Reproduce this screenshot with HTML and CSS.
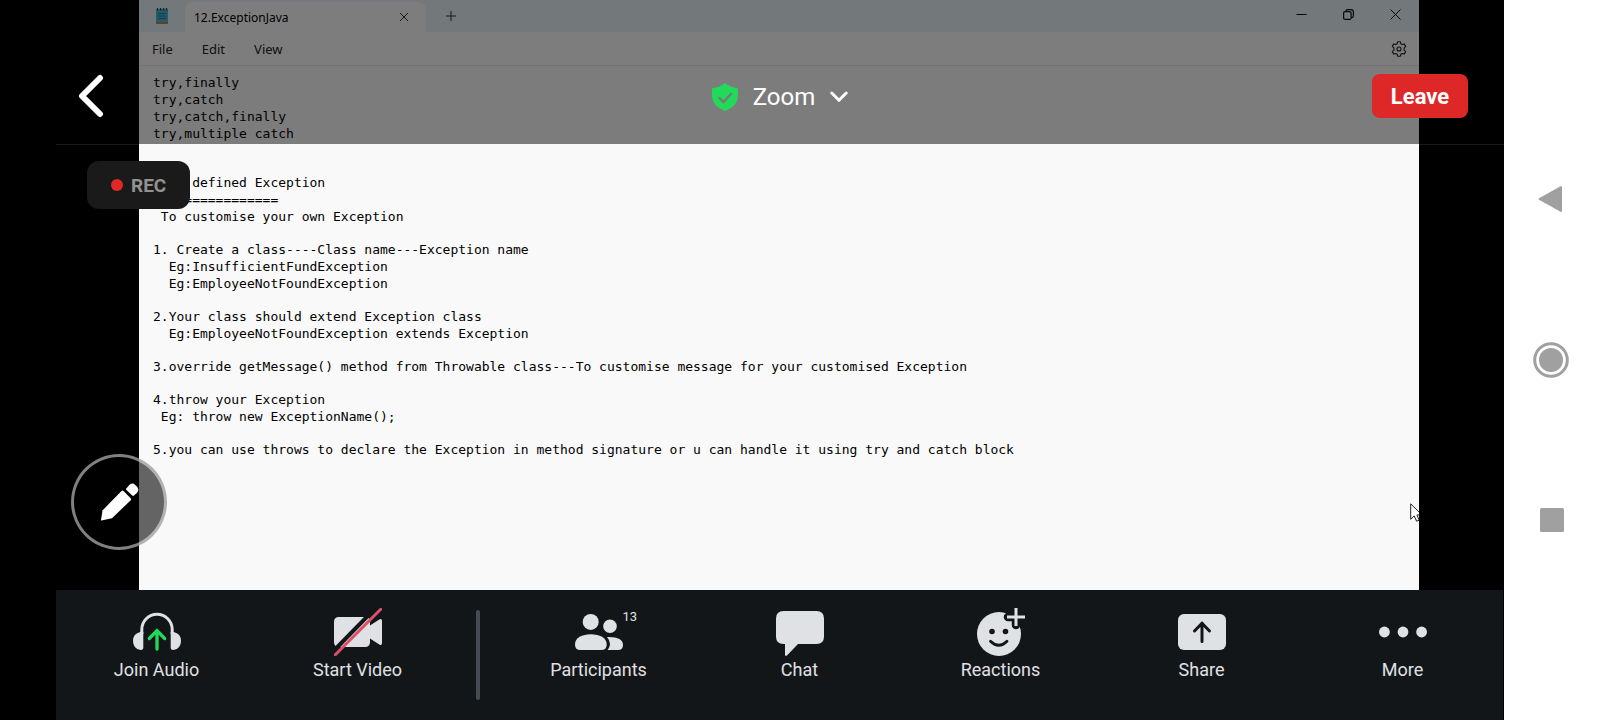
FILE: index.html
```html
<!DOCTYPE html>
<html lang="en">
<head>
<meta charset="utf-8">
<meta name="viewport" content="width=device-width, initial-scale=1">
<title>Zoom</title>
<link rel="stylesheet" href="styles.css">
</head>
<body>
<div class="screen">
  <div class="meeting">
    <main class="stage">
      <section class="notepad" aria-label="Shared screen">
        <div class="titlebar">
          <svg class="app-icon" width="14" height="18" viewBox="0 0 14 18" aria-hidden="true">
            <rect x="1" y="2" width="12" height="14" rx="1" fill="#4db4d2"/>
            <path d="M1 15h12v2H1z" fill="#c08050"/>
            <path d="M2.500 1v2.500M5.500 1v2.500M8.500 1v2.500M11.500 1v2.500" stroke="#23424f" stroke-width="1.200"/>
            <path d="M3 6.500h8M3 9h8M3 11.500h8" stroke="#1c7f9e" stroke-width="1.200"/>
          </svg>
          <div class="tab">
            <span class="tab-name">12.ExceptionJava</span>
            <button class="plain" aria-label="Close tab"><svg width="10" height="10" viewBox="0 0 10 10"><path d="M1 1l8 8M9 1L1 9" stroke="#333" fill="none"/></svg></button>
          </div>
          <button class="plain new-tab" aria-label="New tab"><svg width="10" height="10" viewBox="0 0 10 10"><path d="M5 0v10M0 5h10" stroke="#333" fill="none"/></svg></button>
          <div class="window-buttons">
            <button class="plain" aria-label="Minimize"><svg width="11" height="11" viewBox="0 0 11 11"><path d="M.5 5.500h10" stroke="#111"/></svg></button>
            <button class="plain" aria-label="Restore"><svg width="11" height="11" viewBox="0 0 11 11" fill="none" stroke="#111" stroke-width="1.200"><rect x=".6" y="2.600" width="7.500" height="7.800" rx="1.500"/><path d="M2.800 2.500V2Q3 .7 4.500.7H8Q10.400.7 10.400 3V7Q10.400 8.500 8.500 8.800"/></svg></button>
            <button class="plain" aria-label="Close"><svg width="11" height="11" viewBox="0 0 11 11"><path d="M.5.5l10 10M10.500.5l-10 10" stroke="#111" fill="none"/></svg></button>
          </div>
        </div>
        <div class="menubar">
          <button class="plain">File</button>
          <button class="plain">Edit</button>
          <button class="plain">View</button>
          <button class="plain settings" aria-label="Settings"><svg width="16" height="16" viewBox="0 0 16 16" fill="none" stroke="#222" stroke-width="1.100" stroke-linejoin="round"><path d="M6.600.8h2.800l.4 2 1.400.8 2-.7 1.500 2.500-1.600 1.400v2.400l1.600 1.400-1.500 2.500-2-.7-1.400.8-.4 2H6.600l-.4-2-1.400-.8-2 .7-1.500-2.500 1.600-1.400V6.800L1.300 5.400l1.500-2.500 2 .7 1.400-.8z"/><circle cx="8" cy="8" r="2"/></svg></button>
        </div>
        <div class="document">
<pre class="para section-end">try,finally
try,catch
try,catch,finally
try,multiple catch</pre>
<pre class="para">     defined Exception
    ============
 To customise your own Exception</pre>
<pre class="para">1. Create a class----Class name---Exception name
  Eg:InsufficientFundException
  Eg:EmployeeNotFoundException</pre>
<pre class="para">2.Your class should extend Exception class
  Eg:EmployeeNotFoundException extends Exception</pre>
<pre class="para">3.override getMessage() method from Throwable class---To customise message for your customised Exception</pre>
<pre class="para">4.throw your Exception
 Eg: throw new ExceptionName();</pre>
<pre class="para">5.you can use throws to declare the Exception in method signature or u can handle it using try and catch block</pre>
        </div>
        <svg class="cursor" width="9" height="19" viewBox="0 0 9 19" aria-hidden="true"><path d="M.7.8v15.500l3.500-3.400 2.400 5.300 2.600-1-2.300-5.200h5z" fill="#fff" stroke="#222" stroke-width="1"/></svg>
      </section>

      <header class="topbar">
        <button class="plain back" aria-label="Back"><svg width="26" height="44" viewBox="0 0 26 44"><path d="M22 4L4 22l18 18" fill="none" stroke="#fff" stroke-width="6" stroke-linecap="round" stroke-linejoin="round"/></svg></button>
        <button class="plain meeting-title">
          <svg width="26" height="28" viewBox="0 0 26 28" aria-hidden="true"><path d="M13 0Q18 4 26 5.500V13Q25.500 23.500 13 28 .5 23.500 0 13V5.500Q8 4 13 0z" fill="#23d959"/><path d="M7.500 15l4 4.200L19 11" fill="none" stroke="#6d8173" stroke-width="2.500" stroke-linecap="round" stroke-linejoin="round"/></svg>
          <span>Zoom</span>
          <svg width="18" height="12" viewBox="0 0 18 12" aria-hidden="true"><path d="M1.800 2L9 9.300 16.200 2" fill="none" stroke="#fff" stroke-width="3" stroke-linecap="round" stroke-linejoin="round"/></svg>
        </button>
        <button class="leave">Leave</button>
      </header>

      <div class="rec"><span class="rec-dot"></span>REC</div>

      <button class="annotate" aria-label="Annotate"><svg width="40" height="40" viewBox="0 0 40 40" fill="#fff"><path d="M2.500 38.500Q2 38.500 2 38L3.600 28.300 22.500 9Q23.500 8.200 24.500 9L31.700 16.200Q32.500 17.200 31.700 18.200L13 36.200z"/><path d="M27.300 6.500L30.500 2.800Q33.500.2 36.300 3L38.300 5Q40.500 8 38 10.700L35 13.600Q34 14.300 33.200 13.500L27.200 7.700Q26.700 7.100 27.300 6.500z"/></svg></button>
    </main>

    <nav class="toolbar" aria-label="Meeting controls">
      <button class="tool">
        <svg width="48" height="48" viewBox="0 0 48 48"><path d="M8.800 26V21.500a15.200 15.200 0 0 1 30.400 0V26" fill="none" stroke="#e0e1e4" stroke-width="3"/><path d="M10.300 24v15.500q0 2.500-2.800 2.500Q0 40.500 0 33t7.300-9zM37.700 24v15.500q0 2.500 2.800 2.500Q48 40.500 48 33t-7.300-9z" fill="#e0e1e4"/><path d="M24 41V22.500M16.300 30.500L24 22.700l7.700 7.800" fill="none" stroke="#23d959" stroke-width="3.300" stroke-linecap="round"/></svg>
        <span>Join Audio</span>
      </button>
      <button class="tool">
        <svg width="48" height="48" viewBox="0 0 48 48"><path d="M5 9h26q5 0 5 5v3.500l9.300-6Q48 10 48 13v22q0 3-2.700 1.500L36 30.500V34q0 5-5 5H5q-5 0-5-5V14q0-5 5-5z" fill="#e0e1e4"/><path d="M-1 43.500L42-.5" stroke="#131619" stroke-width="4"/><path d="M1.300 46.700L46.700 1.300" stroke="#da5069" stroke-width="3" stroke-linecap="round"/></svg>
        <span>Start Video</span>
      </button>
      <span class="divider"></span>
      <button class="tool">
        <span class="tool-icon"><svg width="48" height="48" viewBox="0 0 48 48" fill="#e0e1e4"><circle cx="15.700" cy="13.900" r="8"/><circle cx="35" cy="18.300" r="6.800"/><path d="M5.500 42Q0 42 0 36.500C0 29.500 7 26.200 15.800 26.200S31.700 29.500 31.700 36.500Q31.700 42 26.200 42z"/><path d="M32 29Q48 28.500 48 37 48 42 43 42H32.600Q37.500 35.500 32 29z"/></svg><span class="count">13</span></span>
        <span>Participants</span>
      </button>
      <button class="tool">
        <svg width="48" height="48" viewBox="0 0 48 48" fill="#e0e1e4"><path d="M7.500 3h33Q48 3 48 10.500V28.500Q48 36 40.500 36H22L11.200 47.300Q9 48.800 9 46.500V36H7.500Q0 36 0 28.500v-18Q0 3 7.500 3z"/></svg>
        <span>Chat</span>
      </button>
      <button class="tool">
        <svg width="48" height="48" viewBox="0 0 48 48"><circle cx="22" cy="26" r="22" fill="#e0e1e4"/><path d="M39 1.500v15.500M31 9h16" stroke="#131619" stroke-width="8.500" stroke-linecap="round"/><path d="M39 0v18M30 9h18" stroke="#e0e1e4" stroke-width="3"/><circle cx="15" cy="23.500" r="2.800" fill="#131619"/><circle cx="28.500" cy="23.500" r="2.800" fill="#131619"/><path d="M13.500 33.200q8.300 8.200 16.500 0" fill="none" stroke="#131619" stroke-width="2.800" stroke-linecap="round"/></svg>
        <span>Reactions</span>
      </button>
      <button class="tool">
        <svg width="48" height="48" viewBox="0 0 48 48"><rect y="6" width="48" height="36" rx="6" fill="#e0e1e4"/><path d="M24 33.500V15M16.500 23L24 15.200l7.500 7.800" fill="none" stroke="#131619" stroke-width="3" stroke-linecap="round" stroke-linejoin="round"/></svg>
        <span>Share</span>
      </button>
      <button class="tool">
        <svg width="48" height="48" viewBox="0 0 48 48" fill="#e0e1e4"><circle cx="5.400" cy="24" r="5.400"/><circle cx="24" cy="24" r="5.400"/><circle cx="42.600" cy="24" r="5.400"/></svg>
        <span>More</span>
      </button>
    </nav>
  </div>

  <nav class="system-nav" aria-label="System navigation">
    <button class="plain" aria-label="Back"><svg width="36" height="36" viewBox="0 0 36 36"><path d="M28 6v24L6.500 18z" fill="#a0a0a0" stroke="#a0a0a0" stroke-width="2" stroke-linejoin="round"/></svg></button>
    <button class="plain" aria-label="Home"><svg width="36" height="36" viewBox="0 0 36 36"><circle cx="18" cy="18" r="16.300" fill="none" stroke="#a0a0a0" stroke-width="3"/><circle cx="18" cy="18" r="12" fill="#a0a0a0"/></svg></button>
    <button class="plain" aria-label="Recent apps"><svg width="36" height="36" viewBox="0 0 36 36"><rect x="7" y="5" width="24" height="24" rx="1.500" fill="#a0a0a0"/></svg></button>
  </nav>
</div>
</body>
</html>
```

FILE: styles.css
```css
* {
  box-sizing: border-box;
}

body {
  margin: 0;
  background: #000;
  font-family: Roboto, "Liberation Sans", sans-serif;
}

svg {
  display: block;
}

button {
  font: inherit;
  cursor: pointer;
}

.plain {
  display: flex;
  align-items: center;
  padding: 0;
  border: 0;
  background: none;
  color: inherit;
}

.screen {
  display: flex;
  min-height: 100vh;
}

.meeting {
  display: flex;
  flex: 1;
  flex-direction: column;
  min-width: 0;
  padding-left: 56px;
  background: #000;
}

.stage {
  position: relative;
  display: flex;
  flex: 1;
  padding: 0 85px 0 83px;
}

/* Shared notepad window */
.notepad {
  position: relative;
  display: flex;
  flex: 1;
  flex-direction: column;
  min-width: 0;
  overflow: hidden;
  background: #f9f9f9;
  color: #000;
  font-family: "Noto Sans", "Open Sans", sans-serif;
}

.titlebar {
  display: flex;
  align-items: center;
  height: 32px;
  padding: 0 18px 0 16px;
  background: #e6f0f4;
}

.tab {
  display: flex;
  align-items: center;
  justify-content: space-between;
  align-self: flex-end;
  width: 241px;
  height: 30px;
  margin-left: 16px;
  padding: 0 17px 0 9px;
  border-radius: 8px 8px 0 0;
  background: #fbfbfd;
}

.tab-name {
  font-size: 12px;
}

.new-tab {
  margin-left: 20px;
}

.window-buttons {
  display: flex;
  gap: 36px;
  margin-left: auto;
  padding-bottom: 3px;
}

.menubar {
  display: flex;
  gap: 29px;
  height: 34px;
  padding: 0 12px 0 13px;
  border-bottom: 1px solid #e6e6e8;
  background: #fbfbfd;
  color: #222;
  font-size: 13px;
}

.settings {
  margin-left: auto;
}

.document {
  display: flex;
  flex-direction: column;
  gap: 16px;
  padding: 8px 14px;
}

.para {
  margin: 0;
  font-family: "DejaVu Sans Mono", "Liberation Mono", monospace;
  font-size: 13px;
  line-height: 17px;
}

.section-end {
  padding-bottom: 16px;
}

.cursor {
  position: absolute;
  top: 503px;
  right: 0;
}

/* Controls laid over the shared screen */
.topbar {
  position: absolute;
  inset: 0 0 auto;
  display: grid;
  grid-template-columns: 1fr auto 1fr;
  align-items: center;
  height: 145px;
  padding: 48px 22px 0;
  border-bottom: 1px solid rgba(255, 255, 255, 0.1);
  background: rgba(0, 0, 0, 0.5);
  background-clip: padding-box;
  color: #fff;
}

.meeting-title {
  gap: 15px;
  padding-top: 2px;
  font-size: 24px;
}

.leave {
  justify-self: end;
  width: 96px;
  height: 44px;
  margin-right: 14px;
  padding: 0;
  border: 0;
  border-radius: 8px;
  background: #de2828;
  color: #fff;
  font-size: 22px;
  font-weight: 700;
}

.rec {
  position: absolute;
  top: 161px;
  left: 31px;
  display: flex;
  align-items: center;
  gap: 8px;
  height: 48px;
  padding: 0 24px;
  border-radius: 12px;
  background: #1a1a1a;
  color: #929292;
  font-size: 19px;
  font-weight: 700;
}

.rec-dot {
  width: 12px;
  height: 12px;
  border-radius: 50%;
  background: #e02828;
}

.annotate {
  position: absolute;
  bottom: 40px;
  left: 15px;
  display: grid;
  place-items: center;
  width: 96px;
  height: 96px;
  padding: 0;
  border: 3px solid rgba(255, 255, 255, 0.5);
  border-radius: 50%;
  background: rgba(0, 0, 0, 0.6);
}

/* Bottom meeting controls */
.toolbar {
  display: flex;
  height: 130px;
  margin-right: 1px;
  background: #131619;
}

.tool {
  display: flex;
  flex: 1;
  flex-direction: column;
  align-items: center;
  gap: 3px;
  padding: 18px 0 0;
  border: 0;
  background: none;
  color: #e0e1e4;
  font-size: 18px;
  line-height: 22px;
}

.tool-icon {
  position: relative;
}

.count {
  position: absolute;
  top: 0;
  left: 48px;
  font-size: 13px;
  line-height: 18px;
}

.divider {
  width: 4px;
  height: 90px;
  margin: 20px 18px 0;
  border-radius: 2px;
  background: #464a52;
}

/* Phone navigation strip */
.system-nav {
  display: flex;
  flex-direction: column;
  align-items: center;
  justify-content: space-between;
  width: 96px;
  padding: 181px 2px 181px 0;
  background: #fff;
}
```
